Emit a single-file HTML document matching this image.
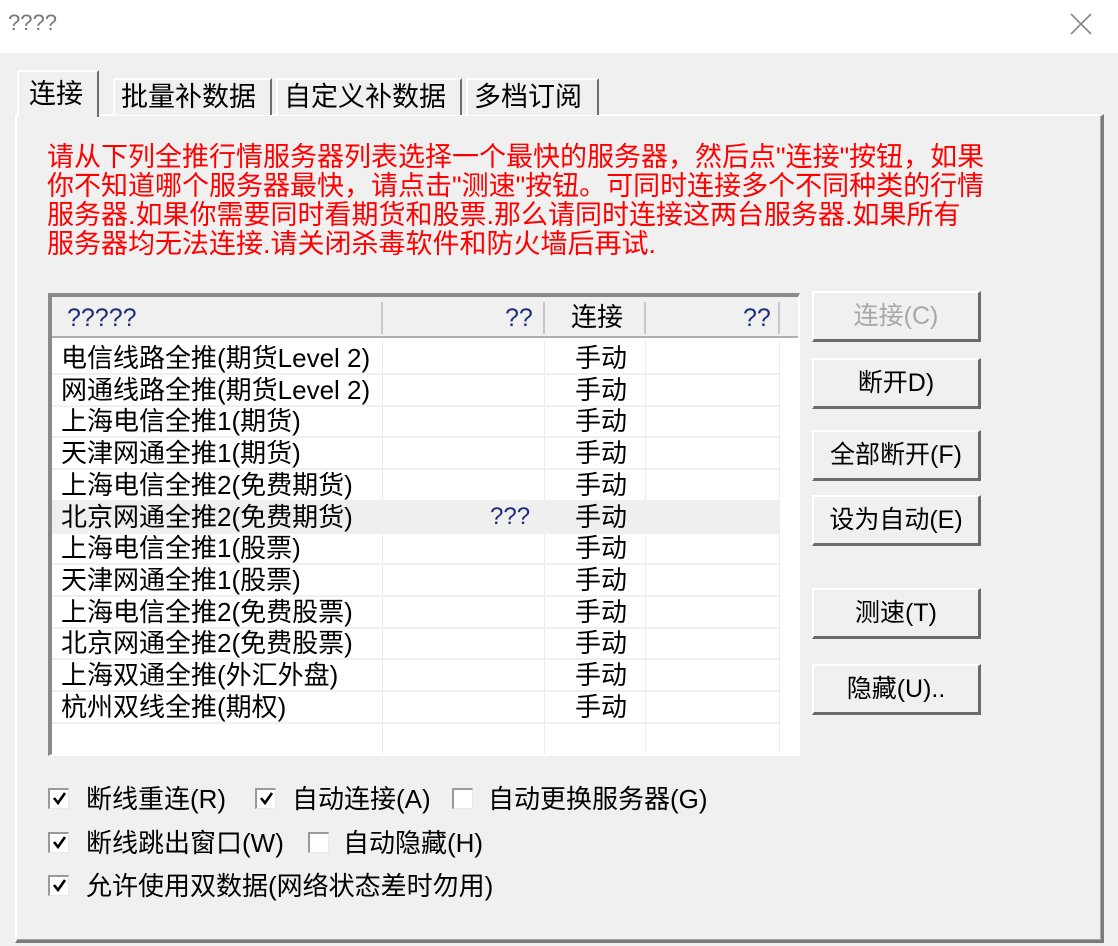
<!DOCTYPE html>
<html><head><meta charset="utf-8"><style>
*{margin:0;padding:0;box-sizing:border-box}
body{width:1118px;height:946px;background:#f0f0f0;position:relative;overflow:hidden;font-family:"Liberation Sans","Noto Sans CJK SC","WenQuanYi Zen Hei",sans-serif;color:#000}
.a{position:absolute;white-space:nowrap}
.title{left:0;top:0;width:1118px;height:53px;background:#fff}
.panel{left:15px;top:114px;width:1089px;height:829px;border-top:2px solid #fff;border-left:2px solid #fff;border-right:3px solid #7a7a7a;border-bottom:3px solid #7a7a7a;box-shadow:inset -1px -1px 0 #a8a8a8}
.tab{font-size:27px;line-height:34px;border-top:2px solid #fff;border-left:2px solid #fff;border-right:2px solid #6e6e6e;padding-left:6px;background:#f0f0f0}
.red{color:#ff0000;font-size:27px;line-height:29px;left:47px;letter-spacing:0px}
.list{left:48px;top:293px;width:752px;height:463px;background:#fff;border-top:4px solid #8a8a8a;border-left:4px solid #8a8a8a;border-right:2px solid #fff;border-bottom:2px solid #fff}
.hdr{left:52px;top:297px;width:746px;height:41px;background:#f0f0f0;border-bottom:2px solid #b0b0b0}
.cell{font-size:26px;line-height:30px}
.btn{width:169px;height:51px;border-top:2px solid #fff;border-left:2px solid #fff;border-right:3px solid #6a6a6a;border-bottom:3px solid #6a6a6a;background:#f0f0f0;font-size:25px;text-align:center;line-height:46px}
.cb{width:21px;height:21px;background:#fff;border-top:2px solid #9a9a9a;border-left:2px solid #9a9a9a;border-right:1px solid #e8e8e8;border-bottom:1px solid #e8e8e8}
.cb svg{position:absolute;left:1px;top:0px}
.lbl{font-size:26px;line-height:30px}
</style></head><body>
<div class="a title"></div>
<div class="a" style="left:8px;top:10px;font-size:22px;color:#777">????</div>
<svg class="a" style="left:1069px;top:12px" width="24" height="24"><path d="M2 2L22 22M22 2L2 22" stroke="#888" stroke-width="1.6"/></svg>
<div class="a panel"></div>
<div class="a tab" style="left:17px;top:70px;width:82px;height:47px;line-height:44px;padding-left:10px;z-index:2">连接</div>
<div class="a tab" style="left:113px;top:78px;width:159px;height:37px">批量补数据</div>
<div class="a tab" style="left:276px;top:78px;width:186px;height:37px">自定义补数据</div>
<div class="a tab" style="left:466px;top:78px;width:133px;height:37px">多档订阅</div>
<div class="a red" style="top:143px">请从下列全推行情服务器列表选择一个最快的服务器，然后点"连接"按钮，如果</div>
<div class="a red" style="top:172px">你不知道哪个服务器最快，请点击"测速"按钮。可同时连接多个不同种类的行情</div>
<div class="a red" style="top:201px">服务器.如果你需要同时看期货和股票.那么请同时连接这两台服务器.如果所有</div>
<div class="a red" style="top:230px">服务器均无法连接.请关闭杀毒软件和防火墙后再试.</div>
<div class="a list"></div>
<div class="a hdr"></div>
<div class="a" style="left:381px;top:302px;width:2px;height:32px;background:#c8c8c8"></div>
<div class="a" style="left:543px;top:302px;width:2px;height:32px;background:#c8c8c8"></div>
<div class="a" style="left:644px;top:302px;width:2px;height:32px;background:#c8c8c8"></div>
<div class="a" style="left:778px;top:302px;width:2px;height:32px;background:#c8c8c8"></div>
<div class="a cell" style="left:67px;top:303px;color:#1a2f7a;font-size:25px">?????</div>
<div class="a cell" style="left:505px;top:303px;color:#1a2f7a;font-size:25px">??</div>
<div class="a cell" style="left:571px;top:302px">连接</div>
<div class="a cell" style="left:743px;top:303px;color:#1a2f7a;font-size:25px">??</div>
<div class="a" style="left:382px;top:340px;width:1px;height:414px;background:#ececec"></div>
<div class="a" style="left:544px;top:340px;width:1px;height:414px;background:#ececec"></div>
<div class="a" style="left:645px;top:340px;width:1px;height:414px;background:#ececec"></div>
<div class="a" style="left:779px;top:340px;width:1px;height:414px;background:#ececec"></div>
<div class="a" style="left:52px;top:502px;width:727px;height:31px;background:#efefef"></div>
<div id="rows"></div>
<div class="a" style="left:490px;top:503px;font-size:24px;color:#1a2f7a">???</div>
<div class="a btn" style="left:812px;top:291px;color:#a8a8a8">连接(C)</div>
<div class="a btn" style="left:812px;top:358px">断开D)</div>
<div class="a btn" style="left:812px;top:430px">全部断开(F)</div>
<div class="a btn" style="left:812px;top:495px">设为自动(E)</div>
<div class="a btn" style="left:812px;top:588px">测速(T)</div>
<div class="a btn" style="left:812px;top:664px">隐藏(U)..</div>
<div class="a cb" style="left:48px;top:788px"><svg width="17" height="17"><path d="M3 8L7 13L14 3" stroke="#000" stroke-width="2.6" fill="none"/></svg></div><div class="a lbl" style="left:86px;top:784px">断线重连(R)</div>
<div class="a cb" style="left:255px;top:788px"><svg width="17" height="17"><path d="M3 8L7 13L14 3" stroke="#000" stroke-width="2.6" fill="none"/></svg></div><div class="a lbl" style="left:292px;top:784px">自动连接(A)</div>
<div class="a cb" style="left:452px;top:788px"></div><div class="a lbl" style="left:488px;top:784px">自动更换服务器(G)</div>
<div class="a cb" style="left:48px;top:832px"><svg width="17" height="17"><path d="M3 8L7 13L14 3" stroke="#000" stroke-width="2.6" fill="none"/></svg></div><div class="a lbl" style="left:86px;top:828px">断线跳出窗口(W)</div>
<div class="a cb" style="left:308px;top:832px"></div><div class="a lbl" style="left:343px;top:828px">自动隐藏(H)</div>
<div class="a cb" style="left:48px;top:875px"><svg width="17" height="17"><path d="M3 8L7 13L14 3" stroke="#000" stroke-width="2.6" fill="none"/></svg></div><div class="a lbl" style="left:86px;top:871px">允许使用双数据(网络状态差时勿用)</div>
<script>
var n=["电信线路全推(期货Level 2)","网通线路全推(期货Level 2)","上海电信全推1(期货)","天津网通全推1(期货)","上海电信全推2(免费期货)","北京网通全推2(免费期货)","上海电信全推1(股票)","天津网通全推1(股票)","上海电信全推2(免费股票)","北京网通全推2(免费股票)","上海双通全推(外汇外盘)","杭州双线全推(期权)"];
var h="";
for(var i=0;i<n.length;i++){var t=343+i*31.7;
h+='<div class="a" style="left:52px;top:'+(t+30)+'px;width:727px;height:2px;background:#f0f0f0"></div>';
h+='<div class="a cell" style="left:61px;top:'+(t)+'px">'+n[i]+'</div>';
h+='<div class="a cell" style="left:575px;top:'+(t)+'px">手动</div>';}
document.getElementById("rows").innerHTML=h;
</script>
</body></html>
